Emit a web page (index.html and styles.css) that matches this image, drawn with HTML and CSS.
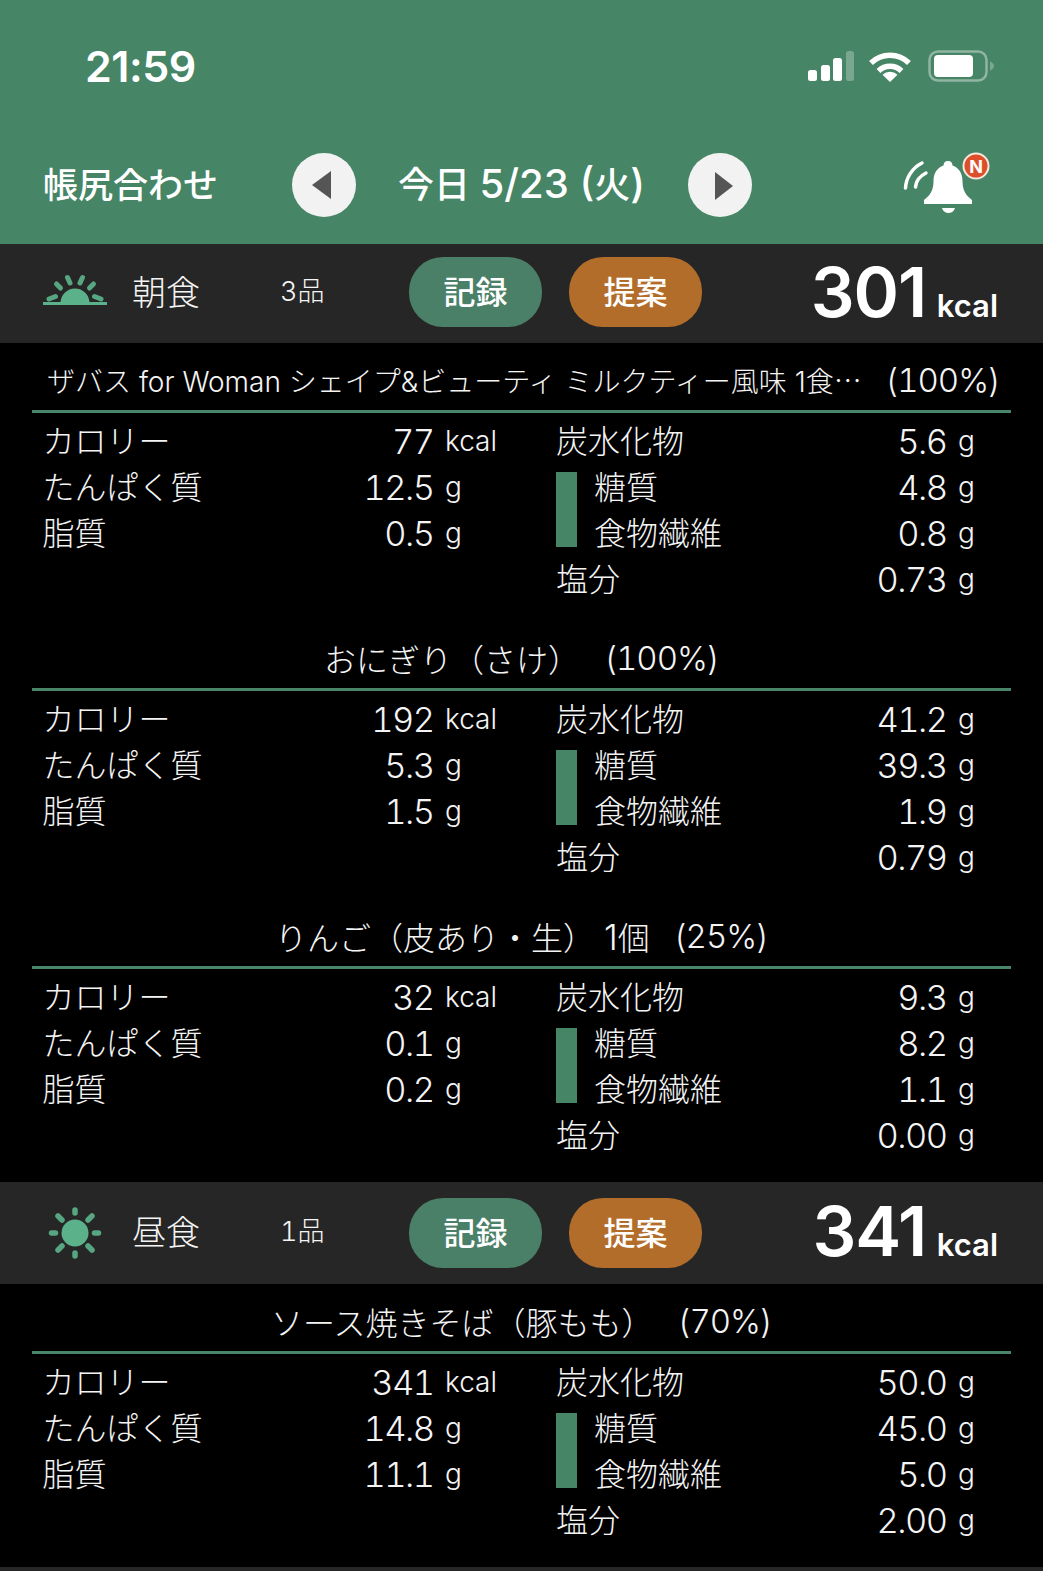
FILE: index.html
```html
<!DOCTYPE html>
<html lang="ja">
<head>
<meta charset="utf-8">
<title>帳尻合わせ</title>
<link rel="stylesheet" href="styles.css">
</head>
<body>
<header class="header">
  <div class="status">
    <span class="time">21:59</span>
    <svg class="signal" viewBox="0 0 46 30"><rect x="0" y="19" width="9" height="11" rx="2.5"/><rect x="13" y="14" width="9" height="16" rx="2.5"/><rect x="25" y="7" width="9" height="23" rx="2.5"/><rect class="dim" x="38" y="0" width="8" height="30" rx="2.5"/></svg>
    <svg class="wifi" viewBox="0 0 44 33"><path class="wifi-arc" d="M3 13A27 27 0 0 1 41 13"/><path class="wifi-arc" d="M10.5 21A16.500 16.500 0 0 1 33.500 21"/><path d="M22 32L14.500 24.800A11 11 0 0 1 29.500 24.800Z"/></svg>
    <svg class="battery" viewBox="0 0 66 32"><rect class="bat-shell" x="1.500" y="1.500" width="57" height="29" rx="8.500"/><rect x="6" y="5" width="39" height="22" rx="4"/><path class="dim" d="M62 11.500C64.500 12.500 66 14 66 16S64.500 19.500 62 20.500Z"/></svg>
  </div>
  <div class="nav">
    <span class="nav-title">帳尻合わせ</span>
    <button class="round"><svg viewBox="0 0 64 64"><path class="tri" d="M39 18V46L20 32Z"/></svg></button>
    <span class="date">今日 <span class="date-latin">5/23 (</span>火<span class="date-latin">)</span></span>
    <button class="round"><svg viewBox="0 0 64 64"><path class="tri" d="M27 19V47L45 33Z"/></svg></button>
    <svg class="bell" viewBox="0 0 92 66">
      <path d="M47 11c-3 0-4.500 2-4.500 4.500C35.500 18 32.500 24 32.500 31c0 9-3 14-9.500 19v4h48v-4c-6.500-5-9.500-10-9.500-19 0-7-3-13-10-15.500C51.500 13 50 11 47 11Z"/>
      <path d="M41 58h13c-1 3.500-3.500 5-6.500 5S42 61.500 41 58Z"/>
      <path class="wave" d="M4.500 38C5 28 11 18 21 13"/>
      <path class="wave" d="M14.500 37C15 31 19 26 25 23"/>
      <circle class="badge" cx="75" cy="16" r="12.500"/>
      <text class="badge-n" x="75" y="22.500">N</text>
    </svg>
  </div>
</header>

<section class="meal">
  <div class="bar bar-first">
    <svg class="meal-icon" viewBox="0 0 64 36">
      <path class="sun-fill" d="M17.500 27A14.500 14.500 0 0 1 46.500 27Z"/>
      <path class="sun-base" d="M0 27.500H64"/>
      <path class="sun-ray" d="M6 23L12.500 20.500M13.500 8L17.500 12M24.500 1.500L27 7M39.500 1.500L37 7M50.500 8L46.500 12M58 23L51.500 20.500"/>
    </svg>
    <span class="meal-name">朝食</span>
    <span class="meal-count">3品</span>
    <button class="pill pill-green">記録</button>
    <button class="pill pill-orange">提案</button>
    <span class="total"><b>301</b> <small>kcal</small></span>
  </div>
  <div class="items">
    <article class="item">
      <h3 class="title title-long"><span class="name-long">ザバス for Woman シェイプ&amp;ビューティ ミルクティー風味 1食⋯</span><span class="pct-long">(100%)</span></h3>
      <div class="macros">
        <div class="col">
          <div class="row"><span class="label">カロリー</span><span class="val">77</span><span class="unit">kcal</span></div>
          <div class="row"><span class="label">たんぱく質</span><span class="val">12.5</span><span class="unit">g</span></div>
          <div class="row"><span class="label">脂質</span><span class="val">0.5</span><span class="unit">g</span></div>
        </div>
        <div class="col">
          <div class="row"><span class="label">炭水化物</span><span class="val">5.6</span><span class="unit">g</span></div>
          <div class="sub">
            <i class="sub-bar"></i>
            <div class="sub-rows">
              <div class="row"><span class="label">糖質</span><span class="val">4.8</span><span class="unit">g</span></div>
              <div class="row"><span class="label">食物繊維</span><span class="val">0.8</span><span class="unit">g</span></div>
            </div>
          </div>
          <div class="row"><span class="label">塩分</span><span class="val">0.73</span><span class="unit">g</span></div>
        </div>
      </div>
    </article>
    <article class="item">
      <h3 class="title"><span>おにぎり（さけ）</span><span class="pct">(100%)</span></h3>
      <div class="macros">
        <div class="col">
          <div class="row"><span class="label">カロリー</span><span class="val">192</span><span class="unit">kcal</span></div>
          <div class="row"><span class="label">たんぱく質</span><span class="val">5.3</span><span class="unit">g</span></div>
          <div class="row"><span class="label">脂質</span><span class="val">1.5</span><span class="unit">g</span></div>
        </div>
        <div class="col">
          <div class="row"><span class="label">炭水化物</span><span class="val">41.2</span><span class="unit">g</span></div>
          <div class="sub">
            <i class="sub-bar"></i>
            <div class="sub-rows">
              <div class="row"><span class="label">糖質</span><span class="val">39.3</span><span class="unit">g</span></div>
              <div class="row"><span class="label">食物繊維</span><span class="val">1.9</span><span class="unit">g</span></div>
            </div>
          </div>
          <div class="row"><span class="label">塩分</span><span class="val">0.79</span><span class="unit">g</span></div>
        </div>
      </div>
    </article>
    <article class="item item-end">
      <h3 class="title"><span>りんご（皮あり・生） <span class="num">1</span>個</span><span class="pct">(25%)</span></h3>
      <div class="macros">
        <div class="col">
          <div class="row"><span class="label">カロリー</span><span class="val">32</span><span class="unit">kcal</span></div>
          <div class="row"><span class="label">たんぱく質</span><span class="val">0.1</span><span class="unit">g</span></div>
          <div class="row"><span class="label">脂質</span><span class="val">0.2</span><span class="unit">g</span></div>
        </div>
        <div class="col">
          <div class="row"><span class="label">炭水化物</span><span class="val">9.3</span><span class="unit">g</span></div>
          <div class="sub">
            <i class="sub-bar"></i>
            <div class="sub-rows">
              <div class="row"><span class="label">糖質</span><span class="val">8.2</span><span class="unit">g</span></div>
              <div class="row"><span class="label">食物繊維</span><span class="val">1.1</span><span class="unit">g</span></div>
            </div>
          </div>
          <div class="row"><span class="label">塩分</span><span class="val">0.00</span><span class="unit">g</span></div>
        </div>
      </div>
    </article>
  </div>
</section>

<section class="meal">
  <div class="bar bar-second">
    <svg class="meal-icon" viewBox="0 0 64 56">
      <circle class="sun-fill" cx="32" cy="28" r="13.500"/>
      <path class="sun-ray ray-thick" d="M32 5V8M32 48V51M8.500 28H12.500M51.500 28H55.500M15 11L19 15M49 11L45 15M15 45L19 41M49 45L45 41"/>
    </svg>
    <span class="meal-name">昼食</span>
    <span class="meal-count">1品</span>
    <button class="pill pill-green">記録</button>
    <button class="pill pill-orange">提案</button>
    <span class="total"><b>341</b> <small>kcal</small></span>
  </div>
  <div class="items">
    <article class="item item-end">
      <h3 class="title"><span>ソース焼きそば（豚もも）</span><span class="pct">(70%)</span></h3>
      <div class="macros">
        <div class="col">
          <div class="row"><span class="label">カロリー</span><span class="val">341</span><span class="unit">kcal</span></div>
          <div class="row"><span class="label">たんぱく質</span><span class="val">14.8</span><span class="unit">g</span></div>
          <div class="row"><span class="label">脂質</span><span class="val">11.1</span><span class="unit">g</span></div>
        </div>
        <div class="col">
          <div class="row"><span class="label">炭水化物</span><span class="val">50.0</span><span class="unit">g</span></div>
          <div class="sub">
            <i class="sub-bar"></i>
            <div class="sub-rows">
              <div class="row"><span class="label">糖質</span><span class="val">45.0</span><span class="unit">g</span></div>
              <div class="row"><span class="label">食物繊維</span><span class="val">5.0</span><span class="unit">g</span></div>
            </div>
          </div>
          <div class="row"><span class="label">塩分</span><span class="val">2.00</span><span class="unit">g</span></div>
        </div>
      </div>
    </article>
  </div>
</section>
<div class="bar-next"></div>
</body>
</html>
```
FILE: styles.css
```css
* { box-sizing: border-box; }
html, body { margin: 0; padding: 0; }
body {
  background: #000;
  color: #f4f4f4;
  font-family: "Inter", "Noto Sans CJK JP", sans-serif;
  font-weight: 300;
  height: 1571px;
  overflow: hidden;
}
.header { height: 244px; background: #468566; color: #fff; }
.status { height: 132px; display: flex; align-items: center; padding-right: 49px; }
.time { font-size: 43px; font-weight: 600; margin-left: 85px; margin-right: auto; letter-spacing: -0.5px; }
.signal { width: 46px; height: 30px; fill: #fff; }
.wifi { width: 44px; height: 33px; margin-left: 14px; fill: #fff; }
.battery { width: 66px; height: 32px; margin-left: 16px; fill: #fff; }
.dim { opacity: 0.28; }
.wifi-arc { fill: none; stroke: #fff; stroke-width: 5.5; }
.bat-shell { fill: none; stroke: rgba(255,255,255,.4); stroke-width: 2.5; }
.nav { height: 106px; display: flex; align-items: center; padding-left: 43px; }
.nav-title { width: 249px; padding-bottom: 6px; font-family: "Noto Sans CJK JP", sans-serif; font-size: 35px; font-weight: 500; }
.round { width: 64px; height: 64px; border: 0; padding: 0; border-radius: 50%; background: #f2f2f2; flex: none; }
.round svg { display: block; width: 64px; height: 64px; }
.tri { fill: #555; }
.date { width: 290px; margin-left: 42px; padding-bottom: 6px; font-size: 36px; font-weight: 500; white-space: nowrap; }
.date-latin { font-size: 40px; }
.bell { width: 92px; height: 66px; margin-left: 149px; margin-top: -4px; fill: #fff; }
.wave { fill: none; stroke: #fff; stroke-width: 3.5; stroke-linecap: round; }
.badge { fill: #dd4f2b; stroke: #f6e9dc; stroke-width: 2; }
.badge-n { fill: #fff; font-size: 18px; font-weight: 700; text-anchor: middle; font-family: "Inter", sans-serif; }

.bar { display: flex; align-items: center; background: #262626; padding-left: 43px; }
.bar-first { height: 99px; }
.bar-second { height: 102px; }
.bar-next { height: 4px; background: #262626; }
.meal-icon { width: 64px; flex: none; overflow: visible; }
.bar-first .meal-icon { height: 36px; }
.bar-second .meal-icon { height: 56px; }
.sun-fill { fill: #5bb189; }
.sun-base { stroke: #5bb189; stroke-width: 3; fill: none; }
.sun-ray { stroke: #56a681; stroke-width: 5; stroke-linecap: round; fill: none; }
.ray-thick { stroke-width: 5.5; }
.meal-name { width: 148px; margin-left: 25px; padding-bottom: 6px; font-size: 34px; font-family: "Noto Sans CJK JP", sans-serif; font-weight: 300; }
.meal-count { width: 129px; padding-bottom: 8px; font-size: 27px; font-variant-numeric: tabular-nums; }
.pill {
  width: 133px; height: 70px; border: 0; border-radius: 34px; padding: 0 0 5px;
  color: #fff; font-family: "Noto Sans CJK JP", sans-serif; font-size: 32px; font-weight: 500;
}
.bar-first .pill { margin-bottom: 3px; }
.pill-green { background: #4a7f68; margin-right: 27px; }
.pill-orange { background: #b36d2b; }
.total { margin-left: auto; padding-right: 45px; padding-bottom: 4px; color: #fff; white-space: nowrap; }
.total b { font-size: 69px; font-weight: 600; letter-spacing: -1px; margin-right: 6px; }
.total small { font-size: 31px; font-weight: 600; }

.items { padding-top: 7px; }
.item { padding-bottom: 26px; }
.item-end { padding-bottom: 24px; }
.title {
  margin: 0 32px 5px; height: 63px; border-bottom: 3px solid #4a8569;
  display: flex; justify-content: center; align-items: center;
  font-size: 32px; font-weight: 300; white-space: pre;
}
.title-long { justify-content: space-between; padding: 0 11px 0 15px; }
.name-long { font-size: 28px; }
.pct-long, .pct { font-size: 33px; letter-spacing: -1px; font-variant-numeric: tabular-nums; }
.pct { margin-left: 24px; }
.num { font-size: 35px; }
.macros { display: flex; gap: 56px; padding-left: 44px; }
.col { width: 457px; }
.col:first-child { width: 456px; }
.row { display: flex; height: 46px; align-items: center; font-size: 32px; }
.label { flex: 1; padding-bottom: 4px; }
.col:first-child .label { margin-left: -1.5px; }
.val { text-align: right; font-size: 34.5px; font-variant-numeric: tabular-nums; letter-spacing: -1.6px; margin-right: 1.6px; }
.unit { width: 65px; padding-left: 10px; font-size: 28px; }
.sub { display: flex; }
.sub-bar { width: 21px; flex: none; background: #468566; margin: 8px 17px 9px 0; }
.sub-rows { flex: 1; }
```
